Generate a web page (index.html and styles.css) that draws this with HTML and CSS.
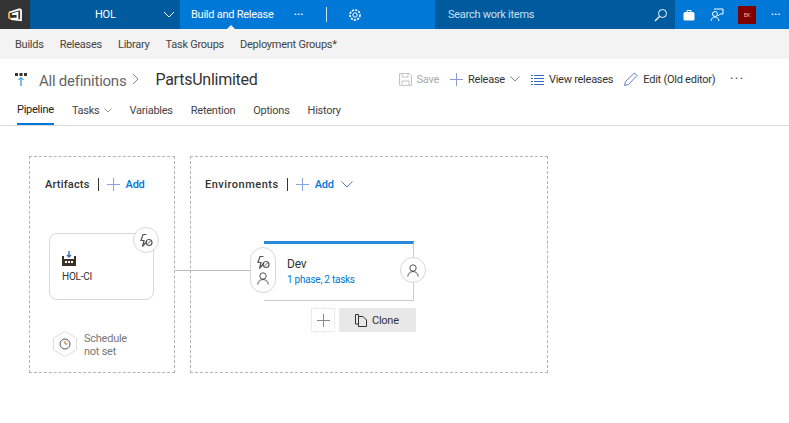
FILE: index.html
```html
<!DOCTYPE html>
<html lang="en">
<head>
    <meta charset="UTF-8">
    <meta name="viewport" content="width=device-width, initial-scale=1.0">
    <title>PartsUnlimited</title>
    <link rel="stylesheet" href="styles.css">
</head>

<body>
    <header class="topbar">
        <div class="logo">
            <svg width="16" height="14" viewBox="0 0 16 14"><path d="M2 4.500 12.500 1.300 14 2V12.300L4 11 10.500 10.300V4.800L5 6.300" fill="none" stroke="#fff" stroke-width="1.800"/><path d="M2 4.500V9.500L4 11" fill="none" stroke="#f2b04a" stroke-width="1.800"/></svg>
        </div>
        <div class="project">
            <span class="project-name">HOL</span>
            <svg class="chevron-white" width="12" height="7" viewBox="0 0 12 7"><path d="M1 1 6 6 11 1" fill="none" stroke="#fff"/></svg>
        </div>
        <nav class="hub">
            <a class="hub-active">Build and Release</a>
            <span class="hub-dots">•••</span>
            <span class="hub-sep"></span>
            <svg width="14" height="14" viewBox="0 0 14 14"><circle cx="7" cy="7" r="2.200" fill="none" stroke="#fff"/><circle cx="7" cy="7" r="5" fill="none" stroke="#fff" stroke-width="1.600" stroke-dasharray="2.200 1.100"/></svg>
        </nav>
        <div class="search">
            <span>Search work items</span>
            <svg width="14" height="14" viewBox="0 0 14 14"><circle cx="8.500" cy="5.500" r="4" fill="none" stroke="#fff"/><path d="M5.500 8.500 1 13" stroke="#fff" stroke-width="1.300"/></svg>
        </div>
        <div class="top-actions">
            <svg width="12" height="12" viewBox="0 0 12 12"><path d="M4 3V1.500H8V3" fill="none" stroke="#fff"/><path d="M.5 4 2 3H10L11.500 4V10.500L10.500 11.500H1.500L.5 10.500Z" fill="#fff"/></svg>
            <svg width="14" height="14" viewBox="0 0 14 14"><circle cx="5" cy="6" r="2.500" fill="none" stroke="#fff"/><path d="M1 13C1.500 10 3 9 5 9S8.500 10 9 13M4 1H13V6H10L8 8" fill="none" stroke="#fff"/></svg>
            <span class="avatar">EK</span>
            <span class="top-dots">•••</span>
        </div>
    </header>

    <nav class="subnav">
        <a>Builds</a>
        <a>Releases</a>
        <a>Library</a>
        <a>Task Groups</a>
        <a>Deployment Groups*</a>
    </nav>

    <section class="titlebar">
        <svg class="title-icon" width="12" height="13" viewBox="0 0 12 13"><path d="M0 0H3V3H0ZM4.500 0H7.500V3H4.500ZM9 0H12V3H9Z" fill="#333"/><path d="M6 13V5M3.500 7 6 4.500 8.500 7" fill="none" stroke="#0078d7"/></svg>
        <span class="crumb">All definitions</span>
        <svg class="crumb-sep" width="7" height="12" viewBox="0 0 7 12"><path d="M1 1 6 6 1 11" fill="none" stroke="#888"/></svg>
        <h1 class="title">PartsUnlimited</h1>
        <div class="commands">
            <span class="command command-off">
                <svg width="13" height="13" viewBox="0 0 13 13"><path d="M.5.5H10.500L12.500 2.500V12.500H.5ZM3 .5V4H9V.5M3 12.500V8H10V12.500" fill="none" stroke="#c4c4c4"/></svg>
                Save
            </span>
            <span class="command">
                <svg width="13" height="13" viewBox="0 0 13 13"><path d="M6.500 0V13M0 6.500H13" stroke="#8c9bd0"/></svg>
                Release
                <svg class="command-chevron" width="10" height="6" viewBox="0 0 10 6"><path d="M.5.5 5 5 9.500.5" fill="none" stroke="#888"/></svg>
            </span>
            <span class="command">
                <svg width="13" height="11" viewBox="0 0 13 11"><path d="M3 1.500H13M3 4.500H13M3 7.500H13M3 10.500H13M0 1.500H2M0 4.500H2M0 7.500H2M0 10.500H2" stroke="#3a6fb5"/></svg>
                View releases
            </span>
            <span class="command">
                <svg width="14" height="14" viewBox="0 0 14 14"><path d="M.5 13.500 1.500 9.500 10.500 1 13 3.500 4.500 12.500Z" fill="none" stroke="#5a7fc0"/></svg>
                Edit (Old editor)
            </span>
            <span class="command-more">•••</span>
        </div>
    </section>

    <nav class="tabs">
        <a class="tab tab-active">Pipeline</a>
        <a class="tab">Tasks <svg width="8" height="5" viewBox="0 0 8 5"><path d="M.5.5 4 4 7.500.5" fill="none" stroke="#999"/></svg></a>
        <a class="tab">Variables</a>
        <a class="tab">Retention</a>
        <a class="tab">Options</a>
        <a class="tab">History</a>
    </nav>

    <main class="canvas">
        <section class="stage stage-artifacts">
            <div class="stage-head">
                <strong>Artifacts</strong>
                <span class="stage-sep"></span>
                <svg width="13" height="13" viewBox="0 0 13 13"><path d="M6.500 0V13M0 6.500H13" stroke="#8aa4de"/></svg>
                <a class="add-link">Add</a>
            </div>

            <div class="artifact">
                <svg width="14" height="15" viewBox="0 0 14 15"><path d="M7 0V6M5 4 7 6 9 4" fill="none" stroke="#3a6fb5" stroke-width="1.400"/><path d="M0 15V5H2V8H12V5H14V15Z" fill="#3a3226"/><path d="M3 10H5V12H3ZM6 10H8V12H6ZM9 10H11V12H9Z" fill="#fff"/></svg>
                <span class="artifact-name">HOL-CI</span>
                <span class="badge badge-artifact">
                    <svg class="bolt" width="13" height="13" viewBox="0 0 13 13"><path d="M6.500 .5H3L1 6.500H4L2.500 12.500 7 7" fill="none" stroke="#555" stroke-width="1.200"/><circle cx="9" cy="8.500" r="3" fill="none" stroke="#555" stroke-width="1.200"/><path d="M7 10.500 11 6.500" stroke="#555"/></svg>
                </span>
            </div>

            <div class="schedule">
                <svg width="24" height="26" viewBox="0 0 24 26"><path d="M12 .5 23.500 7V19L12 25.500 .5 19V7Z" fill="#fff" stroke="#ddd"/><circle cx="12" cy="13" r="5" fill="none" stroke="#555"/><path d="M12 10V13H14.500" fill="none" stroke="#b5761f"/></svg>
                <span class="schedule-text">Schedule<br>not set</span>
            </div>
        </section>

        <section class="stage stage-envs">
            <div class="stage-head">
                <strong>Environments</strong>
                <span class="stage-sep"></span>
                <svg width="13" height="13" viewBox="0 0 13 13"><path d="M6.500 0V13M0 6.500H13" stroke="#8aa4de"/></svg>
                <a class="add-link">Add</a>
                <svg class="add-chevron" width="12" height="7" viewBox="0 0 12 7"><path d="M.5.5 6 6 11.500.5" fill="none" stroke="#5a7fc0"/></svg>
            </div>

            <div class="env">
                <div class="env-pill">
                    <svg width="13" height="13" viewBox="0 0 13 13"><path d="M6.500 .5H3L1 6.500H4L2.500 12.500 7 7" fill="none" stroke="#555" stroke-width="1.200"/><circle cx="9" cy="8.500" r="3" fill="none" stroke="#555" stroke-width="1.200"/><path d="M7 10.500 11 6.500" stroke="#555"/></svg>
                    <svg width="12" height="13" viewBox="0 0 12 13"><circle cx="6" cy="4" r="3.200" fill="none" stroke="#555"/><path d="M.8 12.500C1 9.500 3 7.500 6 7.500S11 9.500 11.200 12.500" fill="none" stroke="#555"/></svg>
                </div>
                <span class="env-name">Dev</span>
                <a class="env-tasks">1 phase, 2 tasks</a>
                <span class="badge badge-env">
                    <svg width="12" height="13" viewBox="0 0 12 13"><circle cx="6" cy="4" r="3.200" fill="none" stroke="#555"/><path d="M.8 12.500C1 9.500 3 7.500 6 7.500S11 9.500 11.200 12.500" fill="none" stroke="#555"/></svg>
                </span>
            </div>

            <div class="env-actions">
                <span class="env-add">
                    <svg width="13" height="13" viewBox="0 0 13 13"><path d="M6.500 0V13M0 6.500H13" stroke="#888"/></svg>
                </span>
                <span class="clone">
                    <svg width="12" height="13" viewBox="0 0 12 13"><path d="M3.500 2.500V.5H.5V10H3.500M3.500 2.500H8L11.500 6V12.500H3.500Z" fill="none" stroke="#333"/></svg>
                    Clone
                </span>
            </div>
        </section>

        <div class="connector"></div>
    </main>
</body>
</html>
```

FILE: styles.css
```css
body
{
    margin: 0;
    font-family: Roboto, "Open Sans", sans-serif;
    font-size: 11px;
    letter-spacing: -0.25px;
    color: #333;
    background-color: #fff;
}

svg
{
    display: block;
    flex: none;
}

/* top bar */
.topbar
{
    display: flex;
    height: 29px;
    color: #fff;
    background-color: #0078d7;
}

.logo
{
    display: flex;
    justify-content: center;
    align-items: center;
    width: 30px;
    background-color: #333;
}

.project
{
    display: flex;
    align-items: center;
    width: 150px;
    box-sizing: border-box;
    padding-left: 65px;
    background-color: #005a9e;
}

.project-name
{
    width: 68px;
}

.hub
{
    display: flex;
    align-items: center;
    width: 255px;
    box-sizing: border-box;
    padding-left: 11px;
}

.hub-active
{
    position: relative;
    width: 81px;
    line-height: 29px;
    white-space: nowrap;
}

.hub-active::after
{
    content: "";
    position: absolute;
    left: 36px;
    bottom: 0;
    border: 4px solid transparent;
    border-top: 0;
    border-bottom-color: #f3f3f3;
}

.hub-dots
{
    width: 32px;
    margin-left: 22px;
    font-size: 8px;
    letter-spacing: 0.5px;
}

.hub-sep
{
    width: 1px;
    height: 15px;
    margin-right: 21px;
    background-color: #cde4f7;
}

.search
{
    display: flex;
    justify-content: space-between;
    align-items: center;
    width: 240px;
    box-sizing: border-box;
    padding: 0 7px 0 13px;
    color: #c7e0f4;
    background-color: #005a9e;
}

.top-actions
{
    display: flex;
    align-items: center;
    flex: 1;
    padding-left: 8px;
}

.top-actions svg:nth-child(2)
{
    margin-left: 15px;
}

.avatar
{
    width: 18px;
    height: 18px;
    margin-left: 14px;
    font-size: 6px;
    line-height: 18px;
    text-align: center;
    color: #e8b8b8;
    background-color: #800000;
}

.top-dots
{
    margin-left: 15px;
    font-size: 8px;
    letter-spacing: 0.5px;
}

/* second row */
.subnav
{
    display: flex;
    gap: 16px;
    align-items: center;
    height: 30px;
    padding-left: 15px;
    color: #444;
    background-color: #f3f3f3;
}

/* title and commands */
.titlebar
{
    display: flex;
    align-items: center;
    height: 40px;
    padding: 0 44px 0 15px;
}

.title-icon
{
    margin-right: 12px;
}

.crumb
{
    padding-top: 3px;
    font-size: 15px;
    white-space: nowrap;
    color: #666;
}

.crumb-sep
{
    margin: 0 16px 0 6px;
}

.title
{
    margin: 0;
    font-size: 16px;
    font-weight: 400;
}

.commands
{
    display: flex;
    align-items: center;
    gap: 11px;
    margin-left: auto;
}

.command
{
    display: flex;
    align-items: center;
    gap: 5px;
}

.command-off
{
    color: #aaa;
}

.command-more
{
    margin-left: 4px;
    font-size: 7px;
    letter-spacing: 2.500px;
}

/* tabs */
.tabs
{
    display: flex;
    gap: 18px;
    height: 26px;
    padding-left: 17px;
    border-bottom: 1px solid #ddd;
}

.tab
{
    display: flex;
    align-items: center;
    gap: 4px;
    height: 26px;
    box-sizing: border-box;
    padding-bottom: 4px;
    color: #444;
}

.tab-active
{
    color: #222;
    border-bottom: 2px solid #0078d7;
}

/* pipeline */
.canvas
{
    position: relative;
    display: flex;
    gap: 15px;
    padding: 30px 0 0 29px;
}

.stage
{
    height: 217px;
    box-sizing: border-box;
    border: 1px dashed #b4b4b4;
}

.stage-artifacts
{
    width: 146px;
}

.stage-envs
{
    width: 358px;
}

.stage-head
{
    display: flex;
    align-items: center;
    gap: 6px;
    height: 16px;
    margin: 19px 0 0 15px;
}

.stage-envs .stage-head
{
    margin-left: 14px;
}

.stage-head strong
{
    font-weight: 500;
    letter-spacing: 0.2px;
}

.stage-envs .stage-head strong
{
    letter-spacing: 0.5px;
}

.stage-sep
{
    width: 1px;
    height: 13px;
    margin: 0 2px;
    background-color: #333;
}

.add-link
{
    font-weight: 500;
    color: #0078d7;
}

.add-chevron
{
    margin-left: 1px;
}

.artifact
{
    position: relative;
    display: flex;
    flex-direction: column;
    gap: 5px;
    width: 105px;
    height: 67px;
    box-sizing: border-box;
    margin: 41px 0 0 19px;
    padding: 17px 0 0 12px;
    border: 1px solid #d8d8d8;
    border-radius: 8px;
}

.artifact-name
{
    font-size: 10px;
}

.badge
{
    position: absolute;
    display: flex;
    justify-content: center;
    align-items: center;
    width: 26px;
    height: 26px;
    box-sizing: border-box;
    border: 1px solid #d8d8d8;
    border-radius: 50%;
    background-color: #fff;
}

.badge-artifact
{
    top: -7px;
    right: -6px;
}

.schedule
{
    display: flex;
    align-items: center;
    gap: 7px;
    margin: 30px 0 0 23px;
    line-height: 13px;
    color: #777;
}

.schedule-text
{
    padding-top: 2px;
}

.env
{
    position: relative;
    display: flex;
    flex-direction: column;
    width: 150px;
    height: 60px;
    box-sizing: border-box;
    margin: 49px 0 0 73px;
    padding: 12px 0 0 23px;
    border-top: 3px solid #2b88d8;
    border-right: 1px solid #ccc;
    border-bottom: 1px solid #ccc;
}

.env-pill
{
    position: absolute;
    top: 3px;
    left: -14px;
    display: flex;
    flex-direction: column;
    justify-content: center;
    align-items: center;
    gap: 3px;
    width: 26px;
    height: 46px;
    box-sizing: border-box;
    border: 1px solid #d8d8d8;
    border-radius: 13px;
    background-color: #fff;
}

.env-name
{
    font-size: 12px;
    line-height: 16px;
}

.env-tasks
{
    margin-top: 2px;
    font-size: 10px;
    color: #0078d7;
}

.badge-env
{
    top: 13px;
    right: -13px;
}

.env-actions
{
    display: flex;
    gap: 4px;
    margin: 7px 0 0 120px;
}

.env-add
{
    display: flex;
    justify-content: center;
    align-items: center;
    width: 24px;
    height: 24px;
    box-sizing: border-box;
    border: 1px dotted #ddd;
}

.clone
{
    display: flex;
    align-items: center;
    gap: 5px;
    width: 77px;
    height: 24px;
    box-sizing: border-box;
    padding-left: 16px;
    background-color: #e8e8e8;
}

.connector
{
    position: absolute;
    top: 144px;
    left: 175px;
    width: 75px;
    height: 1px;
    background-color: #bbb;
}
```
